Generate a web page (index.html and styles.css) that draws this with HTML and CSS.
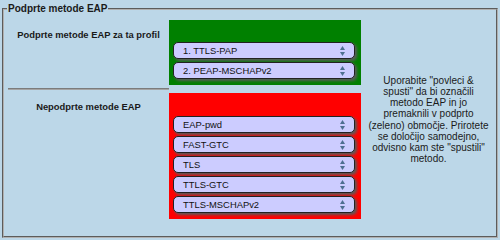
FILE: index.html
```html
<!DOCTYPE html>
<html>
<head>
<meta charset="utf-8">
<link rel="stylesheet" href="styles.css">
</head>
<body>
<fieldset class="group">
  <legend class="group-title">Podprte metode EAP</legend>
  <div class="layout">
    <div class="label label-top">Podprte metode EAP za ta profil</div>
    <div class="zone zone-green">
      <div class="item"><span>1. TTLS-PAP</span><svg class="arrows" width="5" height="10" viewBox="0 0 5 10"><polygon points="0,4 2.5,0 5,4"/><polygon points="0,6 2.5,10 5,6"/></svg></div>
      <div class="item"><span>2. PEAP-MSCHAPv2</span><svg class="arrows" width="5" height="10" viewBox="0 0 5 10"><polygon points="0,4 2.5,0 5,4"/><polygon points="0,6 2.5,10 5,6"/></svg></div>
    </div>
    <div class="note">Uporabite "povleci &amp;<br>spusti" da bi označili<br>metodo EAP in jo<br>premaknili v podprto<br>(zeleno) območje. Prirotete<br>se določijo samodejno,<br>odvisno kam ste "spustili"<br>metodo.</div>
    <div class="sep"></div>
    <div class="gap"></div>
    <div class="label label-bottom">Nepodprte metode EAP</div>
    <div class="zone zone-red">
      <div class="item"><span>EAP-pwd</span><svg class="arrows" width="5" height="10" viewBox="0 0 5 10"><polygon points="0,4 2.5,0 5,4"/><polygon points="0,6 2.5,10 5,6"/></svg></div>
      <div class="item"><span>FAST-GTC</span><svg class="arrows" width="5" height="10" viewBox="0 0 5 10"><polygon points="0,4 2.5,0 5,4"/><polygon points="0,6 2.5,10 5,6"/></svg></div>
      <div class="item"><span>TLS</span><svg class="arrows" width="5" height="10" viewBox="0 0 5 10"><polygon points="0,4 2.5,0 5,4"/><polygon points="0,6 2.5,10 5,6"/></svg></div>
      <div class="item"><span>TTLS-GTC</span><svg class="arrows" width="5" height="10" viewBox="0 0 5 10"><polygon points="0,4 2.5,0 5,4"/><polygon points="0,6 2.5,10 5,6"/></svg></div>
      <div class="item"><span>TTLS-MSCHAPv2</span><svg class="arrows" width="5" height="10" viewBox="0 0 5 10"><polygon points="0,4 2.5,0 5,4"/><polygon points="0,6 2.5,10 5,6"/></svg></div>
    </div>
  </div>
</fieldset>
</body>
</html>
```
FILE: styles.css
```css
html, body {
  margin: 0;
  padding: 0;
  background: #bcd7e8;
  width: 500px;
  height: 240px;
  overflow: hidden;
}
body {
  font-family: "Liberation Sans", Arial, sans-serif;
  color: #1a1a1a;
}
.group {
  margin: 0 2px;
  padding: 2px 0 17px 4px;
  border: 2px groove #b0b0b0;
}
.group-title {
  font-weight: bold;
  font-size: 10px;
  line-height: 18px;
  padding: 0 1px;
  margin-left: -1px;
}
.layout {
  display: grid;
  grid-template-columns: 161px 192px 1fr;
  grid-template-rows: auto 8px auto;
}
.label {
  font-weight: bold;
  font-size: 9.4px;
  text-align: center;
}
.label-top { padding-top: 9px; grid-column: 1; grid-row: 1; }
.label-bottom { padding-top: 8px; grid-column: 1; grid-row: 3; }
.sep {
  grid-column: 1;
  grid-row: 2;
  margin-top: 3px;
  height: 0;
  border-top: 1px solid #7c7c7c;
  border-bottom: 1px solid #a4a4a4;
}
.gap { grid-column: 2; grid-row: 2; }
.zone {
  display: flex;
  flex-direction: column;
  gap: 3px;
  padding: 22px 6px 6px 4px;
}
.zone-green { background: #008000; grid-column: 2; grid-row: 1; }
.zone-red { background: #ff0000; grid-column: 2; grid-row: 3; padding-top: 23px; }
.item {
  height: 15px;
  border: 1px solid #222;
  border-radius: 5px;
  background: #ccccff;
  box-shadow: 2px 2px 3px #5a5a5a;
  display: flex;
  align-items: center;
  justify-content: space-between;
  padding: 0 9px 0 9px;
  font-size: 9.4px;
  color: #111;
}
.arrows { fill: #4e6f90; display: block; }
.note {
  grid-column: 3;
  grid-row: 1 / 4;
  align-self: center;
  text-align: center;
  font-size: 10px;
  line-height: 11.2px;
  color: #1a1a1a;
}
```
